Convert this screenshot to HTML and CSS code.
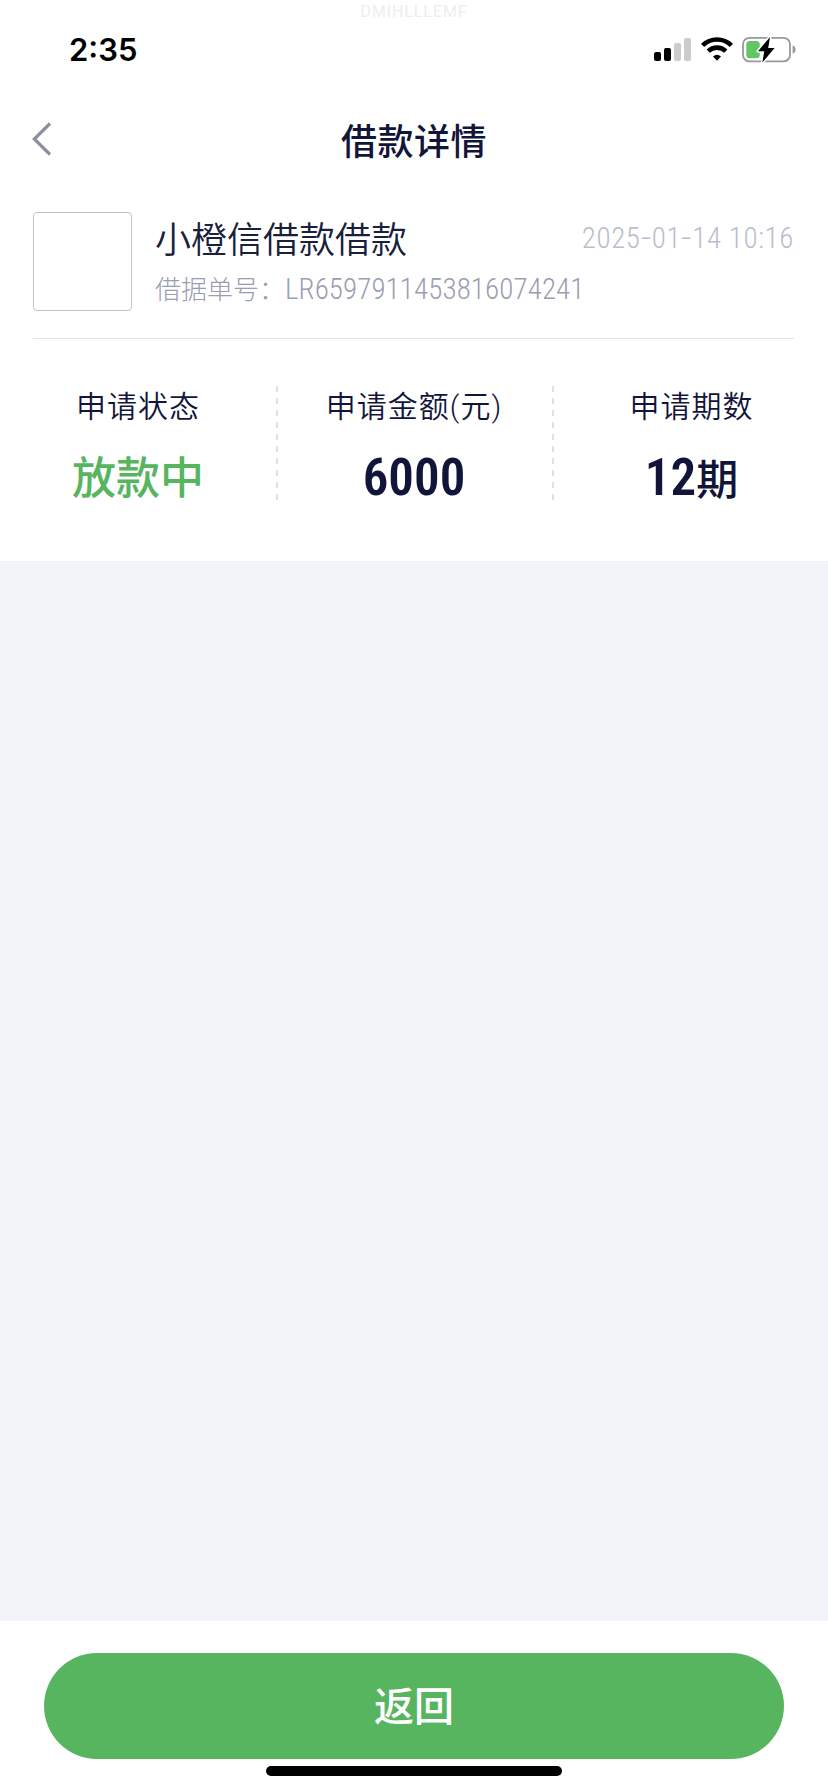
FILE: index.html
```
<!DOCTYPE html>
<html lang="zh">
<head>
    <meta charset="UTF-8">
    <meta name="viewport" content="width=device-width, initial-scale=1.0">
    <title>借款详情</title>
    <link rel="stylesheet" href="styles.css">
</head>
<body>

<div class="watermark">DMIHLLLEMF</div>

<div class="status-bar">
    <span class="time">2:35</span>
    <svg class="status-icons" width="144" height="30" viewBox="0 0 144 30">
        <!-- 信号 -->
        <rect x="2" y="17" width="7" height="9" rx="2"/>
        <rect x="12" y="13" width="7" height="13" rx="2"/>
        <rect x="22" y="8" width="7" height="18" rx="2" fill="#ccc"/>
        <rect x="32" y="3" width="7" height="23" rx="2" fill="#ccc"/>
        <!-- wifi -->
        <g fill="none" stroke="#000" stroke-width="4.6">
            <path d="M50.6 10.4a20.6 20.6 0 0 1 28.8 0"/>
            <path d="M56.2 16.2a12.6 12.6 0 0 1 17.6 0"/>
        </g>
        <path d="M61 21.4q4-3.4 8 0L65 25.8Z"/>
        <!-- 电池 -->
        <rect x="91" y="2.8" width="47" height="23.6" rx="6.5" fill="none" stroke="#999" stroke-width="1.8"/>
        <path d="M140.6 10.2q3 1.2 3 4.3t-3 4.3Z" fill="#999"/>
        <rect x="94.3" y="6" width="13.5" height="17.2" rx="3.5" fill="#62c566"/>
        <path class="bolt" d="M118 2L106 16.2h6.2L110.4 27.6L122.6 13h-6.4Z"/>
    </svg>
</div>

<header>
    <svg class="back" width="20" height="34" viewBox="0 0 20 34">
        <path d="M18 1.5L2.3 17L18 32.5" fill="none" stroke="#8b8f9f" stroke-width="3.2"/>
    </svg>
    <h1>借款详情</h1>
</header>

<div class="loan">
    <div class="logo"></div>
    <div class="loan-info">
        <div class="loan-top">
            <span class="loan-name">小橙信借款借款</span>
            <span class="loan-time">2025<i>-</i>01<i>-</i>14 10:16</span>
        </div>
        <div class="loan-no">借据单号：<span>LR6597911453816074241</span></div>
    </div>
</div>

<div class="stats">
    <div class="stat">
        <p>申请状态</p>
        <strong class="green">放款中</strong>
    </div>
    <div class="stat">
        <p>申请金额(元)</p>
        <strong><b>6000</b></strong>
    </div>
    <div class="stat">
        <p>申请期数</p>
        <strong><b>12</b>期</strong>
    </div>
</div>

<main></main>

<footer>
    <button>返回</button>
    <div class="home-bar"></div>
</footer>

</body>
</html>
```

FILE: styles.css
```
* {
    box-sizing: border-box;
    margin: 0;
    padding: 0;
}
body {
    display: flex;
    flex-direction: column;
    height: 1792px;
    font-family: Roboto, "Noto Sans CJK SC", sans-serif;
    color: #11153a;
    background: #fff;
}
.watermark {
    height: 24px;
    line-height: 23px;
    font-size: 16px;
    letter-spacing: 0.9px;
    text-align: center;
    color: #eee;
}
.status-bar {
    display: flex;
    justify-content: space-between;
    height: 76px;
    padding: 11px 32px 0 69px;
}
.time {
    font: 600 31px/30px Inter, sans-serif;
    color: #000;
}
.bolt {
    stroke: #fff;
    stroke-width: 3px;
    paint-order: stroke;
    stroke-linejoin: round;
}
header {
    display: grid;
    grid-template-columns: 100px 1fr 100px;
    align-items: center;
    height: 78px;
    padding: 0 32px;
}
h1 {
    font-size: 36px;
    font-weight: 500;
    letter-spacing: 0.5px;
    text-align: center;
}
.loan {
    display: flex;
    gap: 23px;
    height: 161px;
    margin: 0 34px 0 33px;
    padding-top: 34px;
    border-bottom: 1px solid #e2e3e6;
}
.logo {
    width: 99px;
    height: 99px;
    border: 1px solid #c4c4c6;
    border-radius: 4px;
}
.loan-info {
    flex: 1;
}
.loan-top {
    display: flex;
    justify-content: space-between;
    height: 53px;
    line-height: 53px;
}
.loan-name {
    font-size: 36px;
    font-weight: 350;
    line-height: 58px;
    color: #18203a;
}
.loan-time {
    font-family: "Roboto Condensed", Roboto, sans-serif;
    font-size: 29px;
    font-weight: 300;
    font-stretch: 75%;
    letter-spacing: 0.6px;
    color: #b9bdcc;
}
.loan-time i {
    display: inline-block;
    font-style: normal;
    padding: 0 1.5px;
    transform: scaleX(1.5);
}
.loan-no {
    font-size: 26px;
    font-weight: 300;
    line-height: 48px;
    white-space: nowrap;
    color: #9a9eb0;
}
.loan-no span {
    font-size: 29px;
    font-stretch: 75%;
    letter-spacing: 0.1px;
}
.stats {
    display: grid;
    grid-template-columns: repeat(3, 1fr);
    height: 222px;
    padding-top: 47px;
}
.stat {
    height: 118px;
    text-align: center;
}
/* 虚线分隔 */
.stat + .stat {
    background: repeating-linear-gradient(#e0e0e3 0 6px, transparent 6px 12px) left top / 2px 100% no-repeat;
}
.stat:last-child {
    padding-left: 3px;
}
.stat p {
    height: 46px;
    font-size: 30px;
    font-weight: 350;
    line-height: 41px;
    letter-spacing: 1px;
}
.stat strong {
    display: block;
    font-size: 43px;
    font-weight: 500;
    line-height: 92px;
}
.stat b {
    font-family: "Roboto Condensed", Roboto, sans-serif;
    font-size: 51px;
    font-weight: 600;
    font-stretch: 75%;
}
.stat:last-child strong {
    font-size: 42px;
}
.stat .green {
    font-size: 44px;
    line-height: 94px;
    color: #57b560;
}
main {
    flex: 1;
    background: #f2f4f9;
}
footer {
    height: 171px;
    padding: 32px 44px 0;
}
button {
    display: block;
    width: 100%;
    height: 106px;
    padding-bottom: 5px;
    border: none;
    border-radius: 53px;
    background: #57b560;
    color: #fff;
    font: 500 40px Roboto, "Noto Sans CJK SC", sans-serif;
}
.home-bar {
    width: 296px;
    height: 10px;
    margin: 7px auto 0;
    border-radius: 5px;
    background: #000;
}
```
